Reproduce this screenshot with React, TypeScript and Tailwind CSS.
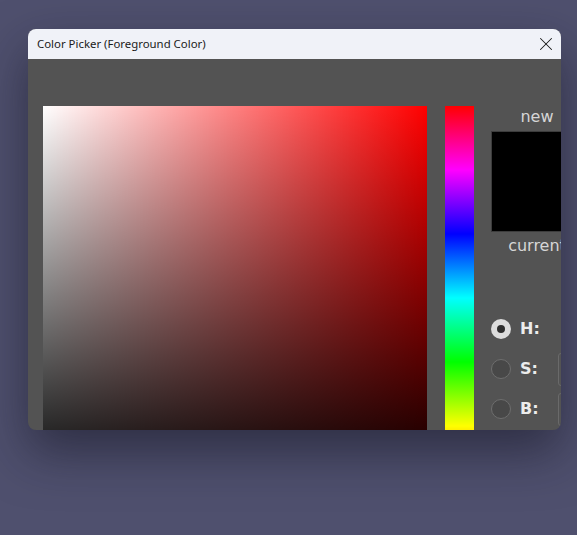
import { X } from "lucide-react";

const hueGradient =
  "linear-gradient(to bottom, #ff0000 0%, #ff00ff 16.67%, #0000ff 33.33%, #00ffff 50%, #00ff00 66.67%, #ffff00 83.33%, #ff0000 100%)";

function Radio({ label, checked }: { label: string; checked?: boolean }) {
  return (
    <div className="flex items-center h-[40px]">
      {checked ? (
        <div className="w-[20px] h-[20px] rounded-full bg-[#dcdcdc] flex items-center justify-center">
          <div className="w-[8px] h-[8px] rounded-full bg-[#2e2e2e]" />
        </div>
      ) : (
        <div className="w-[20px] h-[20px] rounded-full bg-[#484848] border border-[#6e6e6e]" />
      )}
      <span className="ml-[9px] w-[30px] text-[16px] font-bold text-[#ececec]">{label}</span>
      <div
        className={
          checked
            ? "ml-[8px] w-[60px] h-[33px]"
            : "ml-[8px] w-[60px] h-[33px] border border-[#6a6a6a] rounded-[3px]"
        }
      />
    </div>
  );
}

export default function App() {
  return (
    <div
      className="w-[577px] h-[535px] overflow-hidden bg-[#4f506e] pt-[29px] pl-[28px]"
      style={{ fontFamily: '"DejaVu Sans", sans-serif' }}
    >
      <div className="w-[533px] h-[401px] rounded-[8px] overflow-hidden bg-[#535353] shadow-[0_22px_50px_rgba(20,20,35,0.55)] flex flex-col">
        <header className="h-[30px] shrink-0 bg-[#f0f2f8] flex items-center justify-between pl-[9px] pr-[4px]">
          <span
            className="text-[11.4px] text-[#1a1a1a]"
            style={{ fontFamily: '"Noto Sans", "Open Sans", sans-serif' }}
          >
            Color Picker (Foreground Color)
          </span>
          <X className="w-[22px] h-[22px] text-[#1a1a1a]" strokeWidth={1.1} />
        </header>

        <main className="flex flex-row items-start pl-[15px] pt-[47px] w-[700px]">
          <div
            className="w-[384px] h-[384px] shrink-0"
            style={{
              background:
                "linear-gradient(to top, #000 0%, rgba(0,0,0,0) 100%), linear-gradient(to right, #fff 0%, rgba(255,255,255,0) 100%), #ff0000",
            }}
          />
          <div className="ml-[18px] w-[29px] h-[384px] shrink-0" style={{ background: hueGradient }} />

          <div className="ml-[17px] flex flex-col">
            <div className="w-[92px] flex flex-col items-center">
              <span className="text-[16px] leading-[22px] text-[#d6d6d6]">new</span>
              <div className="mt-[3px] w-[92px] h-[101px] bg-black border border-[#3c3c3c]" />
              <span className="text-[16px] leading-[22px] text-[#d6d6d6] mt-[3px]">current</span>
            </div>
            <div className="mt-[52px] flex flex-col">
              <Radio label="H:" checked />
              <Radio label="S:" />
              <Radio label="B:" />
            </div>
          </div>
        </main>
      </div>
    </div>
  );
}
